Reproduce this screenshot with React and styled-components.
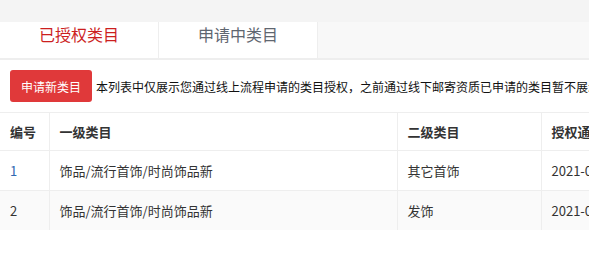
import React from "react";
import styled, { createGlobalStyle } from "styled-components";

const GlobalStyle = createGlobalStyle`
  html, body {
    margin: 0;
    padding: 0;
    background: #fff;
  }
  body {
    font-family: "Noto Sans CJK SC", "Noto Sans", sans-serif;
    overflow: hidden;
  }
`;

const Page = styled.div`
  width: 589px;
  overflow: hidden;
`;

const TopBar = styled.div`
  height: 22px;
  background: #f4f4f4;
`;

const TabBar = styled.div`
  display: flex;
  height: 36px;
  background: #f8f8f8;
  border-bottom: 2px solid #eeeeee;
`;

const Tab = styled.div`
  width: 158px;
  height: 36px;
  line-height: 24px;
  text-align: center;
  font-size: 16px;
  background: #fff;
  border-right: 1px solid #eeeeee;
  color: ${(props) => (props.$active ? "#cc1f1f" : "#5f6670")};
  cursor: pointer;
`;

const Toolbar = styled.div`
  display: flex;
  align-items: center;
  gap: 4px;
  padding: 10px 0 10px 10px;
  white-space: nowrap;
`;

const RedButton = styled.button`
  flex: none;
  width: 82px;
  height: 32px;
  border: none;
  border-radius: 3px;
  background: #e0393a;
  color: #fff;
  font-family: inherit;
  font-size: 12px;
  padding: 0;
  cursor: pointer;
`;

const Notice = styled.span`
  font-size: 12px;
  color: #111;
`;

const Table = styled.table`
  width: 760px;
  table-layout: fixed;
  border-collapse: collapse;
  border-top: 1px solid #eeeeee;
  font-size: 13px;
`;

const HeadCell = styled.th`
  height: 37px;
  padding: 0 10px;
  text-align: left;
  font-weight: bold;
  color: #333;
  border-right: 1px solid #eeeeee;
  border-bottom: 1px solid #eeeeee;
  white-space: nowrap;
  overflow: hidden;
`;

const Row = styled.tr`
  background: ${(props) => (props.$striped ? "#fafafa" : "#fff")};
`;

const Cell = styled.td`
  height: 39px;
  padding: 0 10px;
  color: ${(props) => (props.$link ? "#2f69b1" : "#333")};
  border-right: 1px solid #eeeeee;
  border-bottom: ${(props) => (props.$last ? "none" : "1px solid #eeeeee")};
  white-space: nowrap;
  overflow: hidden;
`;

const rows = [
  { id: 1, first: "饰品/流行首饰/时尚饰品新", second: "其它首饰", time: "2021-05-18 14:32:10" },
  { id: 2, first: "饰品/流行首饰/时尚饰品新", second: "发饰", time: "2021-05-18 14:32:10" },
];

export default function App() {
  return (
    <Page>
      <GlobalStyle />
      <TopBar />
      <TabBar>
        <Tab $active>已授权类目</Tab>
        <Tab>申请中类目</Tab>
      </TabBar>
      <Toolbar>
        <RedButton>申请新类目</RedButton>
        <Notice>
          本列表中仅展示您通过线上流程申请的类目授权，之前通过线下邮寄资质已申请的类目暂不展示
        </Notice>
      </Toolbar>
      <Table>
        <colgroup>
          <col style={{ width: 49 }} />
          <col style={{ width: 348 }} />
          <col style={{ width: 144 }} />
          <col />
        </colgroup>
        <thead>
          <tr>
            <HeadCell>编号</HeadCell>
            <HeadCell>一级类目</HeadCell>
            <HeadCell>二级类目</HeadCell>
            <HeadCell>授权通过时间</HeadCell>
          </tr>
        </thead>
        <tbody>
          {rows.map((r, i) => {
            const last = i === rows.length - 1;
            return (
              <Row key={r.id} $striped={i % 2 === 1}>
                <Cell $link={i === 0} $last={last}>{r.id}</Cell>
                <Cell $last={last}>{r.first}</Cell>
                <Cell $last={last}>{r.second}</Cell>
                <Cell $last={last}>{r.time}</Cell>
              </Row>
            );
          })}
        </tbody>
      </Table>
    </Page>
  );
}
